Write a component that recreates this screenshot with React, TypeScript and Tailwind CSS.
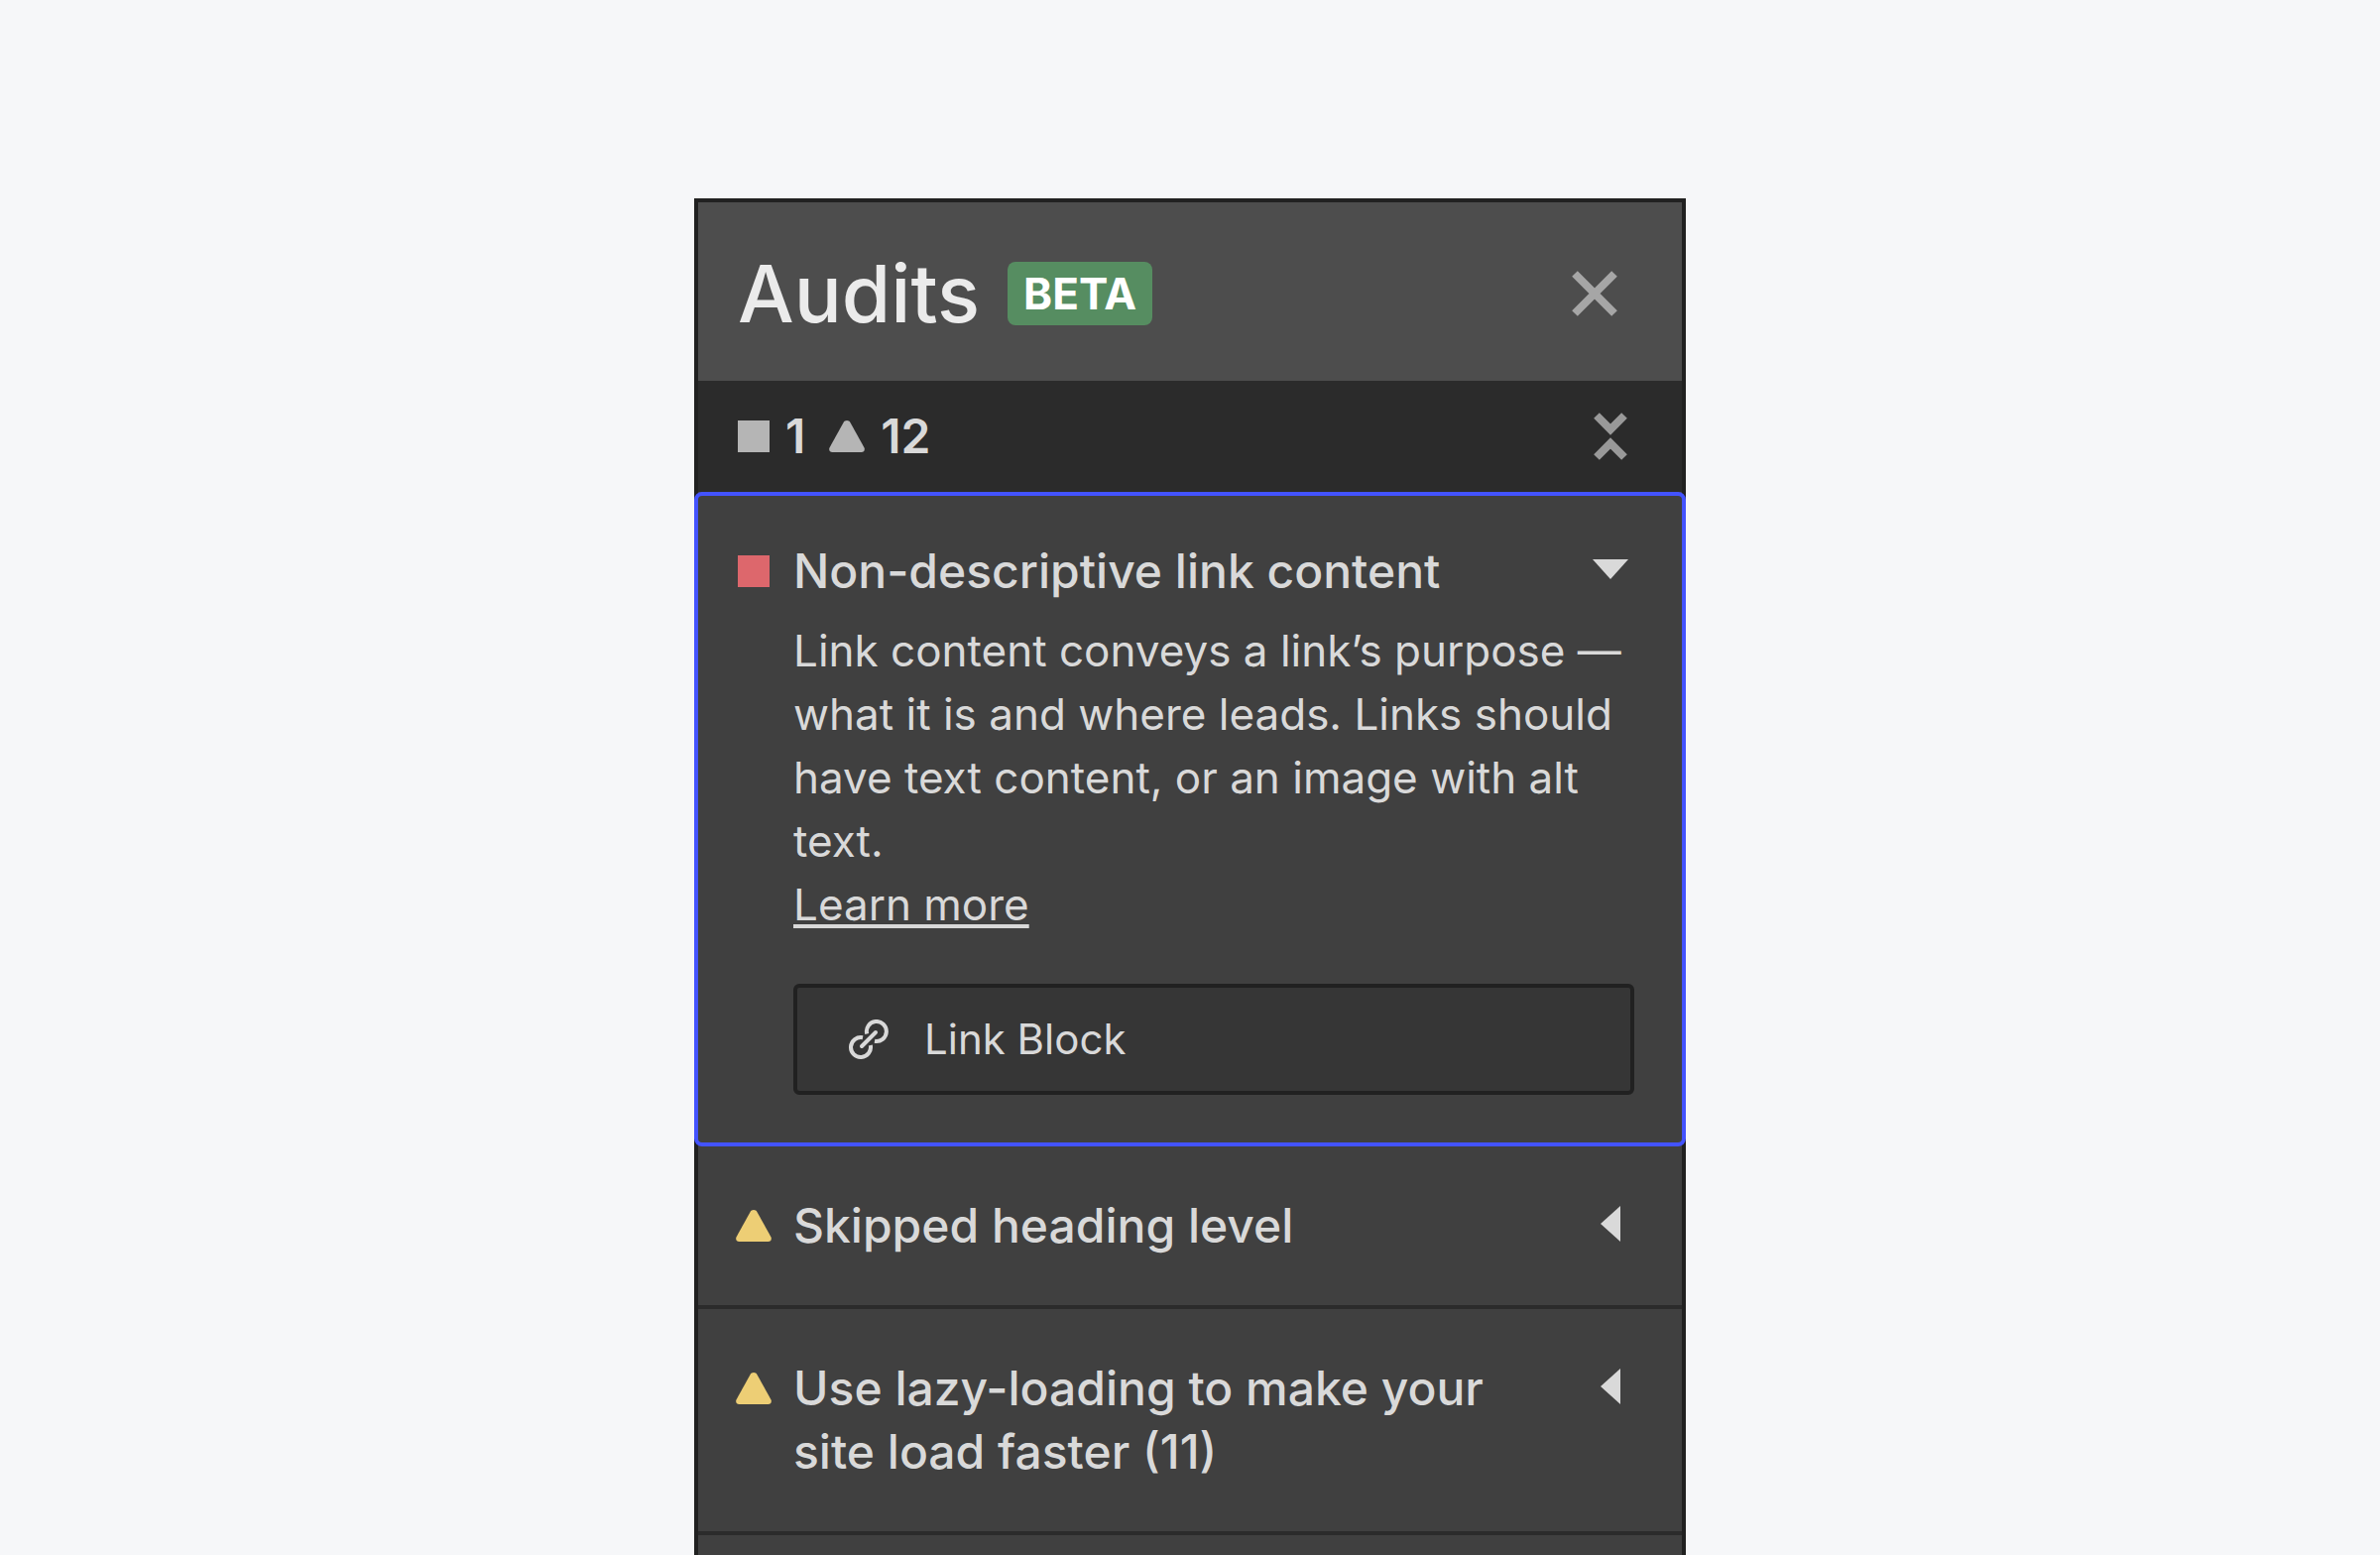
import { useState } from "react";

function WarningTriangle({ className }: { className: string }) {
  return (
    <svg viewBox="0 0 36 32" className={`h-8 w-9 shrink-0 ${className}`} fill="currentColor" aria-hidden="true">
      <path d="M14.6 1.9C15.3 .7 16.5 0 18 0s2.700 .7 3.400 1.900L35.400 27.200C36.600 29.500 35.200 32 32.600 32H3.400C.8 32-.6 29.500 .6 27.200Z" />
    </svg>
  );
}

function Caret({ open }: { open: boolean }) {
  return (
    <svg viewBox="0 0 36 40" className="h-10 w-9" fill="currentColor" aria-hidden="true">
      {open ? <path d="M0 8h36L18 28Z" /> : <path d="M28 0v36L8 18Z" />}
    </svg>
  );
}

function LinkIcon() {
  return (
    <svg
      viewBox="0 0 40 40"
      className="size-10 shrink-0"
      fill="none"
      stroke="currentColor"
      strokeWidth="4"
      aria-hidden="true"
    >
      <path d="M18.200 14.500A10 10 0 1 1 26 21.800" />
      <path d="M14 18.200A10 10 0 1 0 21.800 26" />
      <path d="M27 13 13 27" strokeLinecap="round" />
    </svg>
  );
}

type Audit = {
  title: string;
  level: "error" | "warning";
  body?: string;
  element?: string;
};

const audits: Audit[] = [
  {
    title: "Non-descriptive link content",
    level: "error",
    body: "Link content conveys a link’s purpose — what it is and where leads. Links should have text content, or an image with alt text.",
    element: "Link Block",
  },
  { title: "Skipped heading level", level: "warning" },
  { title: "Use lazy-loading to make your site load faster (11)", level: "warning" },
];

function AuditRow({ audit, open, onToggle }: { audit: Audit; open: boolean; onToggle: () => void }) {
  return (
    <li
      className={
        open
          ? "-mx-1 rounded-lg border-4 border-[#4353ff] bg-[#404040] pt-11 pr-12 pb-12 pl-10"
          : "border-b-4 border-[#2b2b2b] bg-[#404040] py-12 pr-12 pl-10"
      }
    >
      <button type="button" onClick={onToggle} aria-expanded={open} className="flex w-full items-start text-left">
        <span className="flex h-16 w-14 shrink-0 items-center">
          {audit.level === "error" ? (
            <span className="size-8 bg-[#dd676c]" />
          ) : (
            <WarningTriangle className="-ml-0.5 text-[#edce75]" />
          )}
        </span>
        <span className="flex-1 pr-24 text-[48px] leading-16 font-medium">{audit.title}</span>
        <span className="flex h-16 w-12 shrink-0 items-center justify-center">
          <Caret open={open} />
        </span>
      </button>
      {open && audit.body && (
        <div className="mt-4 pl-14">
          <p className="text-[44px] leading-16">{audit.body}</p>
          <a href="#learn-more" className="text-[44px] leading-16 underline decoration-4 underline-offset-4">
            Learn more
          </a>
          <button
            type="button"
            className="mt-12 flex h-28 w-full items-center gap-9 rounded-md border-4 border-[#212121] bg-[#363636] px-13 text-[42px] leading-16"
          >
            <LinkIcon />
            {audit.element}
          </button>
        </div>
      )}
    </li>
  );
}

export default function App() {
  const [openIndex, setOpenIndex] = useState(0);

  return (
    <main className="flex min-h-screen flex-col items-center bg-[#f6f7f9] pt-50 font-['Inter',sans-serif] text-[#d9d9d9]">
      <section className="w-full max-w-[1000px] flex-1 border-x-4 border-t-4 border-[#212121] bg-[#404040]">
        <header className="flex h-45 items-center bg-[#4d4d4d] pt-1 pr-16 pl-10">
          <h1 className="text-[80px] leading-24 font-medium text-[#ebebeb]">Audits</h1>
          <span className="ml-7 rounded-lg bg-[#568d61] px-4 text-[44px] leading-16 font-bold text-white">BETA</span>
          <button type="button" aria-label="Close" className="ml-auto text-[#a6a6a6]">
            <svg viewBox="0 0 48 48" className="size-12" fill="none" stroke="currentColor" strokeWidth="8" aria-hidden="true">
              <path d="M4 4 44 44M44 4 4 44" />
            </svg>
          </button>
        </header>

        <div className="flex h-28 items-center bg-[#2b2b2b] pr-12 pl-10 text-[48px] leading-16 font-semibold">
          <span className="size-8 bg-[#b5b5b5]" />
          <span className="ml-4">1</span>
          <WarningTriangle className="ml-6 text-[#b5b5b5]" />
          <span className="ml-4">12</span>
          <button type="button" aria-label="Collapse all" className="ml-auto text-[#999999]">
            <svg viewBox="0 0 48 52" className="h-13 w-12" fill="none" stroke="currentColor" strokeWidth="8" aria-hidden="true">
              <path d="M10 5 24 19 38 5M10 47 24 33 38 47" />
            </svg>
          </button>
        </div>

        <ul>
          {audits.map((audit, i) => (
            <AuditRow
              key={audit.title}
              audit={audit}
              open={openIndex === i}
              onToggle={() => setOpenIndex(openIndex === i ? -1 : i)}
            />
          ))}
        </ul>
      </section>
    </main>
  );
}
